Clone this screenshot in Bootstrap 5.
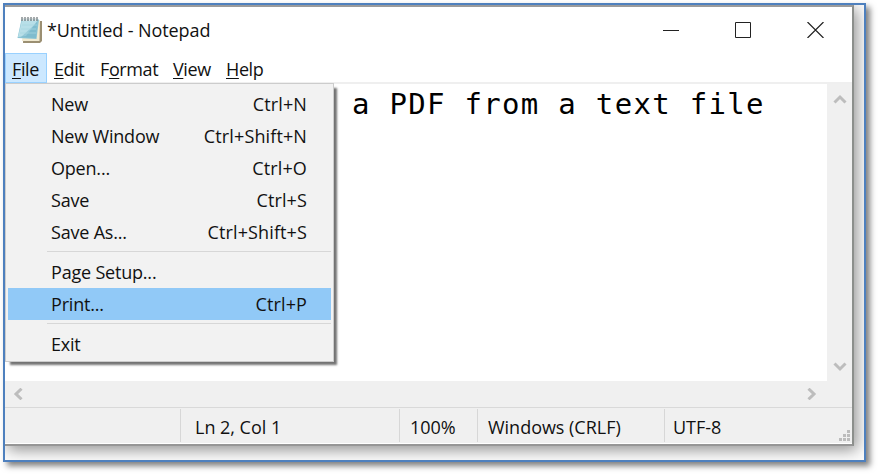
<!DOCTYPE html>
<html lang="en">
<head>
<meta charset="utf-8">
<title>Notepad</title>
<link href="https://cdn.jsdelivr.net/npm/bootstrap@5.3.0/dist/css/bootstrap.min.css" rel="stylesheet">
<style>
body{margin:0;width:878px;height:474px;overflow:hidden;background:#fff;font:18px/24px "Open Sans","Noto Sans",sans-serif;letter-spacing:-.4px;color:#111}
.frame{width:863px;height:459px;margin:3px 0 0 3px;border:2px solid #4e80be;box-shadow:4px 4px 6px rgba(0,0,0,.5);background:#fcfcfc;overflow:hidden}
.frame-wrap{display:flow-root}
.np-window{width:849px;height:441px;background:#fff;border-top:2px solid #9b9b9b;border-right:2px solid #8c8f8c;border-bottom:2px solid #969696;box-shadow:3px 4px 14px rgba(0,0,0,.42)}
.title-row{height:46px;padding-left:12px}
.title-row .caption-text{margin:0 0 0 4px;letter-spacing:-.1px}
.controls{margin:-1px 28px 0 0;gap:56px}
.menu-row{height:29px}
.menu-head{height:30px;line-height:30px;border:1px solid transparent;padding-left:6px}
.menu-row u{text-underline-offset:2px;text-decoration-thickness:1px}
.menu-head.open{width:42px;background:#cce8ff;border-color:#99d1ff}
.w-edit{width:46px}.w-format{width:73px}.w-view{width:53px}
.editor{height:299px;border-top:2px solid #efefef}
.editor pre{font:29px/36px "DejaVu Sans Mono",monospace;letter-spacing:1.3px;color:#000;padding:2px 0 0 347px;margin:0;overflow:hidden}
.vbar{width:25px;background:#f0f0f0;padding:10px 0 9px}
.hbar{height:26px;background:#f0f0f0;padding:0 35px 0 8px}
.status-row{height:37px;background:#f0f0f0;border-top:1px solid #d9d9d9;border-bottom:1px solid #fff;letter-spacing:-.02px}
.status-row>div{border-right:1px solid #d7d7d7;margin:1px 0;line-height:37px}
.s-blank{width:176px}.s-pos{width:219px;padding-left:14px}.s-zoom{width:78px;padding-left:10px}.s-eol{width:187px;padding-left:10px}
.file-menu{top:30px;left:0;width:329px;height:279px;background:#f2f2f2;border:1px solid #ccc;padding:3.5px 2px 0;box-shadow:4px 4px 2px -1px rgba(0,0,0,.55);z-index:5}
.menu-item{height:32.2px;padding:0 24px 0 43px;line-height:32px;letter-spacing:-.2px}
.menu-item span+span{letter-spacing:.12px}
.menu-item.current{background:#91c9f7}
.menu-sep{height:7.5px;padding:2.5px 0 0 39px}
.menu-sep i{display:block;height:1px;background:#d7d7d7}
</style>
<script src="https://cdn.jsdelivr.net/npm/bootstrap@5.3.0/dist/js/bootstrap.bundle.min.js"></script>
</head>
<body>
<div class="frame-wrap">
<div class="frame">
<div class="np-window">
  <div class="title-row d-flex align-items-center">
    <svg width="26" height="28" viewBox="0 0 26 28">
      <path d="M7 5h18v20l-2 2H6z" fill="#9b8f72"/><path d="M7 4h16l-.5 21H5z" fill="#f1ead1"/>
      <path d="M4.500 3.500H22L19.500 23 .5 22z" fill="#8cc5d5"/>
      <path d="M5 4h16L9 20l-8 1z" fill="#b8dfe8"/><path d="M14 12l6-6-1 16-15-1z" fill="#72b3c8" opacity=".5"/>
      <path d="M5 9h15M4 13h15M3 17h16" stroke="#a7d6e1" stroke-width=".8"/>
      <path d="M5 1v4M8 1v4M11 1v4M14 1v4M17 1v4M20 1v4" stroke="#747d80" stroke-width="1.300"/>
      <path d="M6.500 2v3M9.500 2v3M12.500 2v3M15.500 2v3M18.500 2v3" stroke="#dfe6e7"/>
    </svg>
    <div class="caption-text">*Untitled - Notepad</div>
    <div class="controls d-flex ms-auto">
      <svg width="16" height="16"><path d="M0 8.500h16" stroke="#222"/></svg>
      <svg width="16" height="16"><path d="M.5.5h15v15H.5z" fill="none" stroke="#222"/></svg>
      <svg width="17" height="16"><path d="M.5 0l16 16M16.500 0l-16 16" stroke="#222" stroke-width="1.200"/></svg>
    </div>
  </div>
  <div class="menu-row d-flex position-relative">
    <div class="menu-head open"><u>F</u>ile</div>
    <div class="menu-head w-edit"><u>E</u>dit</div>
    <div class="menu-head w-format">F<u>o</u>rmat</div>
    <div class="menu-head w-view"><u>V</u>iew</div>
    <div class="menu-head"><u>H</u>elp</div>
    <div class="file-menu position-absolute">
      <div class="menu-item d-flex justify-content-between"><span>New</span><span>Ctrl+N</span></div>
      <div class="menu-item d-flex justify-content-between"><span>New Window</span><span>Ctrl+Shift+N</span></div>
      <div class="menu-item d-flex justify-content-between"><span>Open...</span><span>Ctrl+O</span></div>
      <div class="menu-item d-flex justify-content-between"><span>Save</span><span>Ctrl+S</span></div>
      <div class="menu-item d-flex justify-content-between"><span>Save As...</span><span>Ctrl+Shift+S</span></div>
      <div class="menu-sep"><i></i></div>
      <div class="menu-item d-flex justify-content-between"><span>Page Setup...</span></div>
      <div class="menu-item current d-flex justify-content-between"><span>Print...</span><span>Ctrl+P</span></div>
      <div class="menu-sep"><i></i></div>
      <div class="menu-item d-flex justify-content-between"><span>Exit</span></div>
    </div>
  </div>
  <div class="editor d-flex">
    <pre class="flex-grow-1">a PDF from a text file</pre>
    <div class="vbar d-flex flex-column align-items-center justify-content-between">
      <svg width="14" height="10"><path d="M1.500 8.500L7 3l5.500 5.500" fill="none" stroke="#bdbdbd" stroke-width="3"/></svg>
      <svg width="14" height="10"><path d="M1.500 1.500L7 7l5.500-5.500" fill="none" stroke="#bdbdbd" stroke-width="3"/></svg>
    </div>
  </div>
  <div class="hbar d-flex justify-content-between align-items-center">
    <svg width="10" height="12"><path d="M8.500 .7L3 6l5.500 5.300" fill="none" stroke="#bdbdbd" stroke-width="3"/></svg>
    <svg width="10" height="12"><path d="M1.500 .7L7 6l-5.500 5.300" fill="none" stroke="#bdbdbd" stroke-width="3"/></svg>
  </div>
  <div class="status-row d-flex">
    <div class="s-blank"></div>
    <div class="s-pos">Ln 2, Col 1</div>
    <div class="s-zoom">100%</div>
    <div class="s-eol">Windows (CRLF)</div>
    <div class="border-0 ps-2">UTF-8</div>
    <svg class="ms-auto align-self-end" width="13" height="13" fill="#bcbcbc"><path d="M8 0h3v3H8zM4 4h3v3H4zM8 4h3v3H8zM0 8h3v3H0zM4 8h3v3H4zM8 8h3v3H8z"/></svg>
  </div>
</div>
</div>
</div>
</body>
</html>
